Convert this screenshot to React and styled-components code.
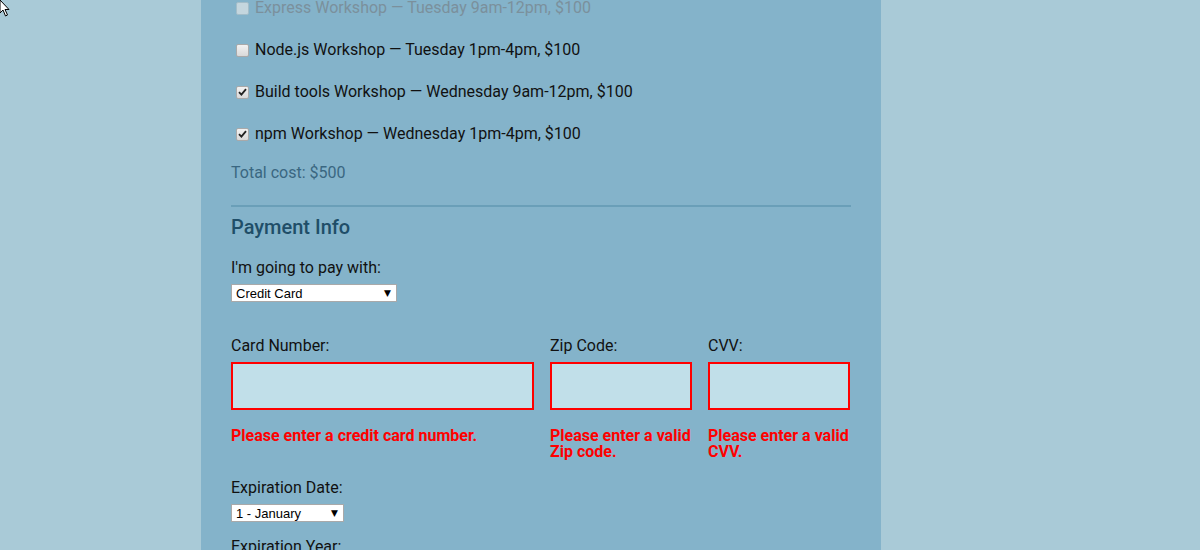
import React from 'react';
import styled, { createGlobalStyle } from 'styled-components';

const GlobalStyle = createGlobalStyle`
  html, body {
    margin: 0;
    padding: 0;
    background: #a9cad7;
    font-family: Roboto, "Liberation Sans", sans-serif;
    overflow: hidden;
  }
`;

const Page = styled.div`
  height: 550px;
  overflow: hidden;
`;

const Panel = styled.form`
  width: 620px;
  margin: -2px 0 0 201px;
  padding: 0 30px 40px;
  background: #84b3ca;
  font-size: 16px;
  color: #111;
`;

const Activity = styled.label`
  display: flex;
  align-items: center;
  height: 20px;
  line-height: 20px;
  margin-bottom: 22px;
  color: ${p => (p.$disabled ? '#7b909c' : '#111')};
`;

const Box = styled.span`
  width: 11px;
  height: 11px;
  margin: 0 6px 0 5px;
  border: 1px solid ${p => (p.$disabled ? '#a3bdc9' : '#a9a9a9')};
  border-radius: 2px;
  background: ${p => (p.$disabled ? '#c4d6de' : 'linear-gradient(#f2f2f2, #d9d9d9)')};
  display: flex;
  align-items: center;
  justify-content: center;
`;

const Total = styled.p`
  margin: -3px 0 0;
  line-height: 20px;
  color: #3a6781;
`;

const Rule = styled.hr`
  margin: 22px 0 0;
  border: 0;
  height: 2px;
  background: #6a9fb8;
`;

const Heading = styled.h3`
  margin: 8px 0 0;
  font-size: 20px;
  line-height: 24px;
  font-weight: 500;
  color: #1f4e68;
`;

const Label = styled.label`
  display: block;
  line-height: 20px;
  margin-top: ${p => p.$top || 0}px;
`;

const SelectWrap = styled.div`
  position: relative;
  width: ${p => p.$w}px;
  margin-top: ${p => p.$top}px;
`;

const Select = styled.select`
  appearance: none;
  width: 100%;
  height: 18px;
  margin: 0;
  padding: 0 0 0 4px;
  border: 1px solid #a9a9a9;
  border-radius: 0;
  background: #fff;
  font-family: "Liberation Sans", Arial, sans-serif;
  font-size: 13px;
  color: #000;
  display: block;
`;

const Arrow = styled.span`
  position: absolute;
  right: 6px;
  top: 3px;
  font-size: 9px;
  line-height: 12px;
  color: #000;
  pointer-events: none;
  font-family: "DejaVu Sans", sans-serif;
`;

const CardRow = styled.div`
  display: grid;
  grid-template-columns: 303px 142px 142px;
  column-gap: 16px;
  margin-top: 34px;
`;

const Field = styled.div`
  display: flex;
  flex-direction: column;
`;

const Input = styled.input`
  box-sizing: border-box;
  width: 100%;
  height: 48px;
  margin-top: 6px;
  border: 2px solid #ff0000;
  background: #c1dfe9;
  outline: none;
`;

const Error = styled.span`
  margin-top: 18px;
  font-weight: 700;
  font-size: 16px;
  line-height: 16px;
  color: #ff0000;
`;

const Cursor = styled.svg`
  position: absolute;
  left: 0;
  top: 0;
`;

const Check = () => (
  <svg width="9" height="8" viewBox="0 0 9 8">
    <path d="M1 4.2 L3.4 6.6 L8 1.2" fill="none" stroke="#222" strokeWidth="1.8" />
  </svg>
);

const workshops = [
  { name: 'Express Workshop — Tuesday 9am-12pm, $100', disabled: true },
  { name: 'Node.js Workshop — Tuesday 1pm-4pm, $100' },
  { name: 'Build tools Workshop — Wednesday 9am-12pm, $100', checked: true },
  { name: 'npm Workshop — Wednesday 1pm-4pm, $100', checked: true },
];

const App = () => {
  return (
    <Page>
      <GlobalStyle />
      <Cursor width="10" height="18" viewBox="0 0 10 18">
        <path d="M0 0 L0 13 L3 10 L5.5 16 L7.5 15 L5 9.5 L9 9.5 Z" fill="#fff" stroke="#000" strokeWidth="1" />
      </Cursor>
      <Panel>
        {workshops.map(w => (
          <Activity key={w.name} $disabled={w.disabled}>
            <Box $disabled={w.disabled}>{w.checked && <Check />}</Box>
            {w.name}
          </Activity>
        ))}
        <Total>Total cost: $500</Total>
        <Rule />
        <Heading>Payment Info</Heading>
        <Label $top={19}>I'm going to pay with:</Label>
        <SelectWrap $w={166} $top={6}>
          <Select defaultValue="credit">
            <option value="credit">Credit Card</option>
            <option value="paypal">PayPal</option>
            <option value="bitcoin">Bitcoin</option>
          </Select>
          <Arrow>▼</Arrow>
        </SelectWrap>
        <CardRow>
          <Field>
            <Label>Card Number:</Label>
            <Input type="text" />
            <Error>Please enter a credit card number.</Error>
          </Field>
          <Field>
            <Label>Zip Code:</Label>
            <Input type="text" />
            <Error>Please enter a valid Zip code.</Error>
          </Field>
          <Field>
            <Label>CVV:</Label>
            <Input type="text" />
            <Error>Please enter a valid CVV.</Error>
          </Field>
        </CardRow>
        <Label $top={18}>Expiration Date:</Label>
        <SelectWrap $w={113} $top={6}>
          <Select defaultValue="1">
            <option value="1">1 - January</option>
          </Select>
          <Arrow>▼</Arrow>
        </SelectWrap>
        <Label $top={15}>Expiration Year:</Label>
      </Panel>
    </Page>
  );
};

export default App;
